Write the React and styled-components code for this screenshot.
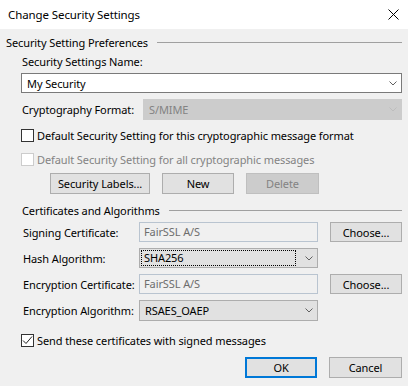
import React from 'react'
import styled, { createGlobalStyle } from 'styled-components'

const GlobalStyle = createGlobalStyle`
  html, body { margin: 0; padding: 0; background: #f0f0f0; }
  body { font-family: "Noto Sans", "Open Sans", sans-serif; font-size: 11px; color: #000; }
`

const FONT = `"Noto Sans", "Open Sans", sans-serif`

const Chevron = ({ color = '#606060' }) => (
  <svg width="8" height="5" viewBox="0 0 8 5">
    <path d="M0.5 0.5 L4 4 L7.5 0.5" fill="none" stroke={color} strokeWidth="1" />
  </svg>
)

const Window = styled.div`
  width: 408px;
  height: 386px;
  display: flex;
  flex-flow: column;
  background: #f0f0f0;
  overflow: hidden;
  font: normal 11px ${FONT};
  letter-spacing: -0.1px;
`

const TitleBar = styled.div`
  height: 29px;
  flex: 0 0 29px;
  background: #fff;
  display: flex;
  align-items: center;
  justify-content: space-between;
  padding: 0 9px 0 8px;
  box-sizing: border-box;
  h1 {
    margin: 0;
    font: normal 11.5px ${FONT};
    color: #000;
  }
`

const Body = styled.div`
  display: flex;
  flex-flow: column;
  padding: 0 6px 0 6px;
`

const Legend = styled.div`
  display: flex;
  align-items: center;
  height: 16px;
  margin-top: ${p => p.$top}px;
  padding-left: ${p => p.$indent}px;
  gap: 9px;
  white-space: nowrap;
  &::after {
    content: '';
    flex: 1;
    height: 1px;
    background: #a0a0a0;
    margin-top: 1px;
  }
`

const Section = styled.div`
  display: flex;
  flex-flow: column;
  padding-left: 15px;
`

const Label = styled.div`
  height: 16px;
  line-height: 16px;
  margin-top: ${p => p.$top || 0}px;
  padding-left: 1px;
  white-space: nowrap;
`

const Combo = styled.div`
  height: ${p => p.$h || 20}px;
  box-sizing: border-box;
  display: flex;
  align-items: center;
  justify-content: space-between;
  padding: 0 4px 0 ${p => p.$pl || 5}px;
  margin-top: ${p => p.$top || 0}px;
  background: ${p => (p.$disabled ? '#cccccc' : p.$button ? '#e1e1e1' : '#fff')};
  border: 1px solid ${p => (p.$disabled ? '#cccccc' : p.$button ? '#adadad' : '#7a7a7a')};
  color: ${p => (p.$disabled ? '#838383' : '#000')};
  flex: ${p => (p.$grow ? 1 : 'none')};
`

const Focus = styled.span`
  flex: 1;
  margin-right: 10px;
  padding-left: 2px;
  outline: 1px dotted #000;
  line-height: 14px;
`

const Row = styled.div`
  display: flex;
  align-items: center;
  margin-top: ${p => p.$top || 0}px;
`

const FieldLabel = styled.div`
  width: ${p => p.$w}px;
  flex: 0 0 ${p => p.$w}px;
  padding-left: 1px;
  box-sizing: border-box;
  white-space: nowrap;
`

const CheckRow = styled.label`
  display: flex;
  align-items: center;
  height: 16px;
  margin-top: ${p => p.$top}px;
  color: ${p => (p.$disabled ? '#838383' : '#000')};
  white-space: nowrap;
`

const Box = styled.span`
  width: 13px;
  height: 13px;
  box-sizing: border-box;
  border: 1px solid ${p => (p.$disabled ? '#cccccc' : '#333')};
  background: #fff;
  margin-right: 3px;
  display: flex;
  align-items: center;
  justify-content: center;
`

const Button = styled.button`
  width: ${p => p.$w || 73}px;
  height: ${p => p.$h || 21}px;
  box-sizing: border-box;
  padding: 0;
  font: normal 11px ${FONT};
  letter-spacing: -0.1px;
  background: ${p => (p.disabled ? '#cccccc' : '#e1e1e1')};
  border: ${p => (p.$default ? '2px solid #0078d7' : p.disabled ? '1px solid #bfbfbf' : '1px solid #adadad')};
  color: ${p => (p.disabled ? '#838383' : '#000')};
  justify-self: end;
`

const Buttons = styled.div`
  display: flex;
  gap: 12px;
  padding-left: ${p => p.$indent || 0}px;
  margin-top: ${p => p.$top}px;
  justify-content: ${p => (p.$end ? 'flex-end' : 'flex-start')};
`

const CertGrid = styled.div`
  display: grid;
  grid-template-columns: 117px 179px 1fr;
  row-gap: 6px;
  align-items: center;
  padding-left: 16px;
  margin-top: 4px;
`

const ReadOnly = styled.div`
  height: 20px;
  box-sizing: border-box;
  border: 1px solid #b9c4d0;
  background: #f0f0f0;
  color: #6d6d6d;
  padding-left: 4px;
  line-height: 18px;
`

const Check = () => (
  <svg width="11" height="11" viewBox="0 0 11 11">
    <path d="M1 5.5 L4 8.5 L10 1.5" fill="none" stroke="#222" strokeWidth="1" />
  </svg>
)

export default function App() {
  return (
    <Window>
      <GlobalStyle />
      <TitleBar>
        <h1>Change Security Settings</h1>
        <svg width="11" height="11" viewBox="0 0 11 11">
          <path d="M0.5 0.5 L10.5 10.5 M10.5 0.5 L0.5 10.5" stroke="#000" strokeWidth="1" />
        </svg>
      </TitleBar>
      <Body>
        <Legend $top={5} $indent={0}>Security Setting Preferences</Legend>
        <Section>
          <Label $top={4}>Security Settings Name:</Label>
          <Combo $top={3}>
            <span>My Security</span>
            <Chevron />
          </Combo>
          <Row $top={6}>
            <FieldLabel $w={122}>Cryptography Format:</FieldLabel>
            <Combo $grow $disabled $h={21}>
              <span>S/MIME</span>
              <Chevron color="#bdbdbd" />
            </Combo>
          </Row>
          <CheckRow $top={7}>
            <Box />
            Default Security Setting for this cryptographic message format
          </CheckRow>
          <CheckRow $top={8} $disabled>
            <Box $disabled />
            Default Security Setting for all cryptographic messages
          </CheckRow>
          <Buttons $top={6} $indent={29}>
            <Button $w={100}>Security Labels...</Button>
            <Button $w={72}>New</Button>
            <Button disabled>Delete</Button>
          </Buttons>
        </Section>
        <Legend $top={8} $indent={16}>Certificates and Algorithms</Legend>
        <CertGrid>
          <FieldLabel $w={117}>Signing Certificate:</FieldLabel>
          <ReadOnly>FairSSL A/S</ReadOnly>
          <Button $w={72} $h={20}>Choose...</Button>

          <FieldLabel $w={117}>Hash Algorithm:</FieldLabel>
          <Combo $button $pl={2}>
            <Focus>SHA256</Focus>
            <Chevron />
          </Combo>
          <span />

          <FieldLabel $w={117}>Encryption Certificate:</FieldLabel>
          <ReadOnly>FairSSL A/S</ReadOnly>
          <Button $w={72} $h={20}>Choose...</Button>

          <FieldLabel $w={117}>Encryption Algorithm:</FieldLabel>
          <Combo $button $h={21}>
            <span>RSAES_OAEP</span>
            <Chevron />
          </Combo>
          <span />
        </CertGrid>
        <Section>
          <CheckRow $top={11}>
            <Box><Check /></Box>
            Send these certificates with signed messages
          </CheckRow>
        </Section>
        <Buttons $top={9} $end>
          <Button $default $w={72}>OK</Button>
          <Button>Cancel</Button>
        </Buttons>
      </Body>
    </Window>
  )
}
